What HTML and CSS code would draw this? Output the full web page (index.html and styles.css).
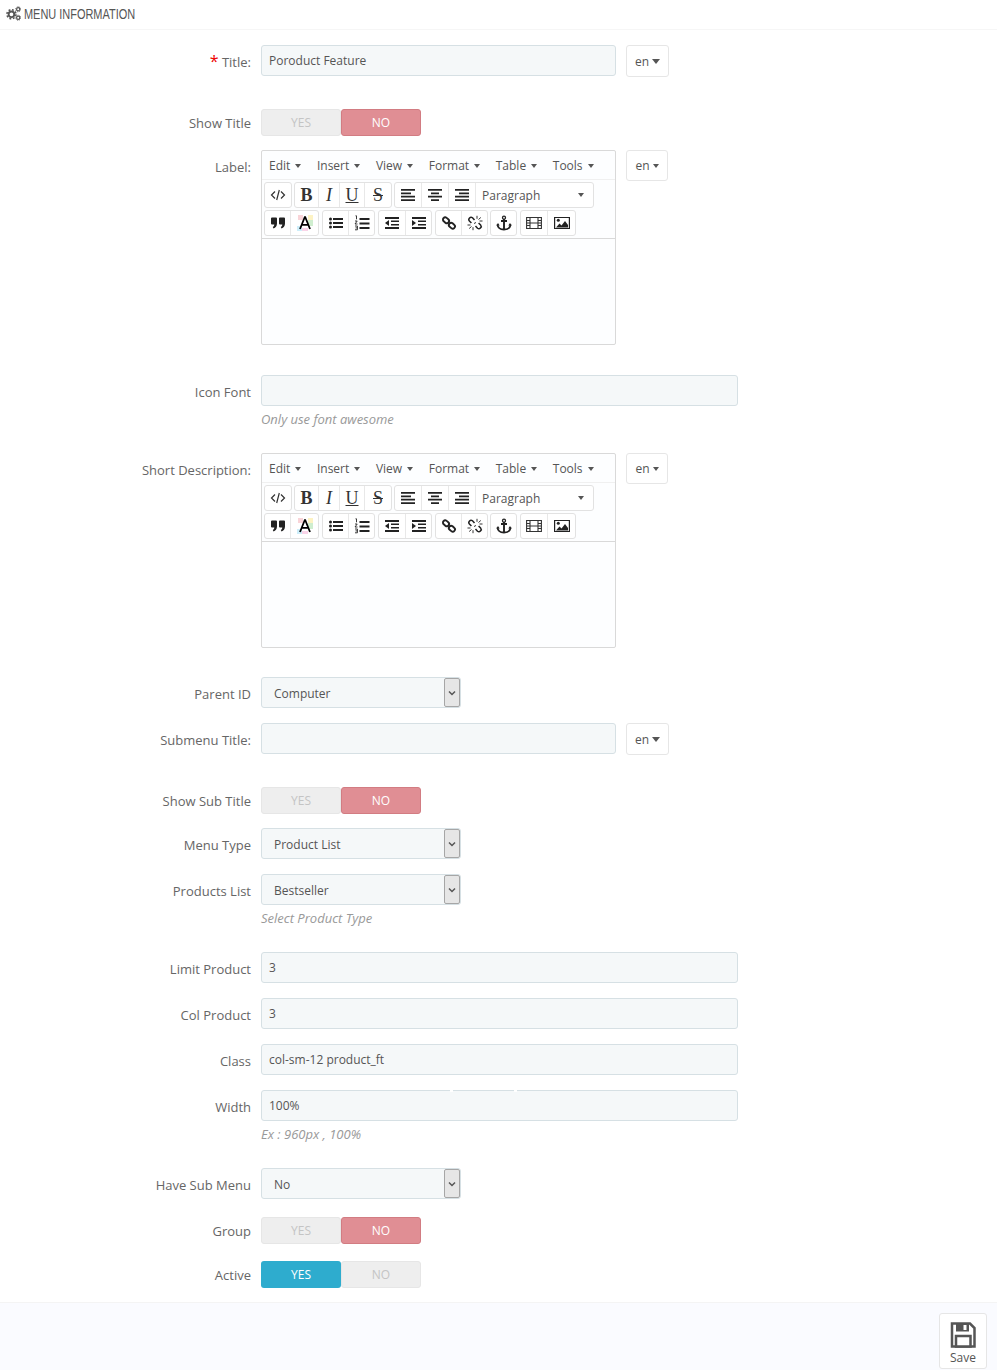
FILE: index.html
```html
<!DOCTYPE html>
<html lang="en">
  <head>
    <meta charset="UTF-8" />
    <meta name="viewport" content="width=device-width, initial-scale=1.0" />
    <title>Menu Information</title>
    <link rel="stylesheet" href="styles.css">
  </head>
  <body>
    <!-- Shared icons -->
    <svg class="sprite" xmlns="http://www.w3.org/2000/svg">
      <symbol id="i-code" viewBox="0 0 16 16"><path d="M5 4.500 1.500 8 5 11.500M11 4.500 14.500 8 11 11.500M9.300 3 6.700 13" fill="none" stroke="#333" stroke-width="1.200"/></symbol>
      <symbol id="i-left" viewBox="0 0 16 16"><path d="M1 2h14v1.800H1zM1 5.400h10v1.800H1zM1 8.800h14v1.800H1zM1 12.200h14V14H1z" fill="#222"/></symbol>
      <symbol id="i-center" viewBox="0 0 16 16"><path d="M1 2h14v1.800H1zM4 5.400h8v1.800H4zM1 8.800h14v1.800H1zM4 12.200h8V14H4z" fill="#222"/></symbol>
      <symbol id="i-right" viewBox="0 0 16 16"><path d="M1 2h14v1.800H1zM5 5.400h10v1.800H5zM1 8.800h14v1.800H1zM1 12.200h14V14H1z" fill="#222"/></symbol>
      <symbol id="i-quote" viewBox="0 0 16 16"><path d="M1 3.500a1 1 0 0 1 1-1h4a1 1 0 0 1 1 1v5c0 2.500-1.500 4.500-3.500 5L2.800 12c1-.5 1.500-1.300 1.500-2.500H2a1 1 0 0 1-1-1zM9 3.500a1 1 0 0 1 1-1h4a1 1 0 0 1 1 1v5c0 2.500-1.500 4.500-3.500 5l-.7-1.500c1-.5 1.500-1.300 1.500-2.500H10a1 1 0 0 1-1-1z" fill="#222"/></symbol>
      <symbol id="i-color" viewBox="0 0 16 16">
        <rect x="1" y="0" width="5" height="5" fill="#f9d4d8"/><rect x="11" y="0" width="5" height="5" fill="#fdf3c4"/>
        <rect x="11" y="5" width="5" height="6" fill="#cfeecf"/>
        <rect x="0" y="11" width="5" height="5" fill="#cdeefa"/><rect x="5" y="13" width="6" height="3" fill="#f9d4e8"/>
        <path d="M8 1.500 3 14M8 1.500 13 14M4.800 9.800h6.400" fill="none" stroke="#000" stroke-width="1.800"/>
      </symbol>
      <symbol id="i-bullets" viewBox="0 0 16 16"><path d="M5 3h10v2H5zM5 7h10v2H5zM5 11h10v2H5z" fill="#222"/><circle cx="2.500" cy="4" r="1.500" fill="#222"/><circle cx="2.500" cy="8" r="1.500" fill="#222"/><circle cx="2.500" cy="12" r="1.500" fill="#222"/></symbol>
      <symbol id="i-numbers" viewBox="0 0 16 16"><path d="M5.500 3h10v2h-10zM5.500 7.500h10v2h-10zM5.500 12h10v2h-10z" fill="#222"/><path d="M1.500 .8h1v3.500M1 6h2.200L1 9h2.500M1 11h2.400v3.800H1M1.500 12.900h1.900" fill="none" stroke="#222" stroke-width=".9"/></symbol>
      <symbol id="i-outdent" viewBox="0 0 16 16"><path d="M1 2h14v2H1zM7 5.500h8V7H7zM7 9h8v1.500H7zM1 12h14v2H1z" fill="#222"/><path d="M5 5v6L1 8z" fill="#222"/></symbol>
      <symbol id="i-indent" viewBox="0 0 16 16"><path d="M1 2h14v2H1zM7 5.500h8V7H7zM7 9h8v1.500H7zM1 12h14v2H1z" fill="#222"/><path d="M1 5v6l4-3z" fill="#222"/></symbol>
      <symbol id="i-link" viewBox="0 0 16 16"><g fill="none" stroke="#222" stroke-width="1.900"><rect x="1.800" y="3" width="6.500" height="4.500" rx="2.200" transform="rotate(40 5 5.200)"/><rect x="7.700" y="8.500" width="6.500" height="4.500" rx="2.200" transform="rotate(40 11 10.700)"/></g><path d="m7 7 2 2" stroke="#222" stroke-width="1.500"/></symbol>
      <symbol id="i-unlink" viewBox="0 0 16 16"><g fill="none" stroke="#222" stroke-width="1.500"><path d="M7.500 5 5.500 2.800a2.200 2.200 0 0 0-3.100 3.100l2 2.100"/><path d="m8.500 11 2 2.200a2.200 2.200 0 0 0 3.100-3.100l-2-2.100"/></g><path d="M10 .8v3M13.800 2.500l-2.300 2M15.500 6h-3M.5 10h3M2.200 13.500l2.300-2M6 15.200v-3M9 7.500 7 8.500" stroke="#333" stroke-width="1"/></symbol>
      <symbol id="i-anchor" viewBox="0 0 16 16"><circle cx="8" cy="2.700" r="1.500" fill="none" stroke="#222" stroke-width="1.300"/><path d="M8 4v10M5 6h6" stroke="#222" stroke-width="1.900" fill="none"/><path d="M1.500 9.500c.3 3.500 3.500 5 6.500 5s6.200-1.500 6.500-5" fill="none" stroke="#222" stroke-width="1.800"/><path d="M.3 10.500 2 8l1.700 2.500zM12.300 10.500 14 8l1.700 2.500z" fill="#222"/></symbol>
      <symbol id="i-film" viewBox="0 0 16 16"><path d="M.6 2.500h14.800v11H.6zM4 2.500v11M12 2.500v11M.6 5.500H4M.6 8H4M.6 10.500H4M12 5.500h3.400M12 8h3.400M12 10.500h3.400M4 8h8" fill="none" stroke="#333" stroke-width="1.100"/></symbol>
      <symbol id="i-image" viewBox="0 0 16 16"><path d="M.6 2.500h14.800v11H.6z" fill="#fff" stroke="#222" stroke-width="1.200"/><path d="m2 12.500 3.500-4 2 2 3.500-4.500 3 4v2.500z" fill="#222"/><circle cx="4.300" cy="5.200" r="1.500" fill="#222"/></symbol>
    </svg>

    <header class="panel-heading">
      <svg class="cogs" viewBox="0 0 16 16">
        <circle cx="5.800" cy="8.800" r="3" fill="none" stroke="#555" stroke-width="2"/>
        <circle cx="5.800" cy="8.800" r="4.800" fill="none" stroke="#555" stroke-width="1.700" stroke-dasharray="2 1.770"/>
        <circle cx="13" cy="3.500" r="1.700" fill="none" stroke="#555" stroke-width="1.300"/>
        <circle cx="13" cy="3.500" r="2.700" fill="none" stroke="#555" stroke-width=".9" stroke-dasharray="1.200 .92"/>
        <circle cx="13" cy="12.500" r="1.700" fill="none" stroke="#555" stroke-width="1.300"/>
        <circle cx="13" cy="12.500" r="2.700" fill="none" stroke="#555" stroke-width=".9" stroke-dasharray="1.200 .92"/>
      </svg>
      <span class="heading-text">Menu Information</span>
    </header>

    <form class="form">
      <div class="form-group after-lang">
        <label class="control-label"><em>*</em> Title:</label>
        <input class="field field-short" type="text" value="Poroduct Feature" />
        <button type="button" class="lang">en <i class="caret-big"></i></button>
      </div>

      <div class="form-group switch-row">
        <label class="control-label">Show Title</label>
        <div class="switch"><span class="off">YES</span><span class="no">NO</span></div>
      </div>

      <div class="form-group after-editor">
        <label class="control-label">Label:</label>
        <div class="editor">
          <div class="mce-menu">
            <span>Edit <i></i></span><span>Insert <i></i></span><span>View <i></i></span><span>Format <i></i></span><span>Table <i></i></span><span>Tools <i></i></span>
          </div>
          <div class="mce-toolbar">
            <div class="mce-row">
              <div class="mce-group"><button type="button" class="w26"><svg><use href="#i-code"/></svg></button></div>
              <div class="mce-group">
                <button type="button" class="w23 glyph bold">B</button><button type="button" class="w21 glyph italic">I</button><button type="button" class="w25 glyph under">U</button><button type="button" class="w27 glyph strike">S</button>
              </div>
              <div class="mce-group">
                <button type="button" class="w26"><svg><use href="#i-left"/></svg></button><button type="button"><svg><use href="#i-center"/></svg></button><button type="button"><svg><use href="#i-right"/></svg></button><button type="button" class="mce-select">Paragraph <i></i></button>
              </div>
            </div>
            <div class="mce-row mce-row-wide">
              <div class="mce-group"><button type="button" class="w25"><svg><use href="#i-quote"/></svg></button><button type="button" class="w28"><svg><use href="#i-color"/></svg></button></div>
              <div class="mce-group"><button type="button" class="w25"><svg><use href="#i-bullets"/></svg></button><button type="button" class="w26"><svg><use href="#i-numbers"/></svg></button></div>
              <div class="mce-group"><button type="button" class="w26"><svg><use href="#i-outdent"/></svg></button><button type="button" class="w26"><svg><use href="#i-indent"/></svg></button></div>
              <div class="mce-group"><button type="button" class="w25"><svg><use href="#i-link"/></svg></button><button type="button" class="w26"><svg><use href="#i-unlink"/></svg></button></div>
              <div class="mce-group mce-group-close"><button type="button" class="w25"><svg><use href="#i-anchor"/></svg></button></div>
              <div class="mce-group"><button type="button" class="w26"><svg><use href="#i-film"/></svg></button><button type="button" class="w28"><svg><use href="#i-image"/></svg></button></div>
            </div>
          </div>
          <div class="mce-body"></div>
        </div>
        <button type="button" class="lang lang-small">en <i class="caret-small"></i></button>
      </div>

      <div class="form-group">
        <label class="control-label">Icon Font</label>
        <div class="field-wrap">
          <input class="field field-wide" type="text" />
          <p class="help">Only use font awesome</p>
        </div>
      </div>

      <div class="form-group after-short">
        <label class="control-label">Short Description:</label>
        <div class="editor">
          <div class="mce-menu">
            <span>Edit <i></i></span><span>Insert <i></i></span><span>View <i></i></span><span>Format <i></i></span><span>Table <i></i></span><span>Tools <i></i></span>
          </div>
          <div class="mce-toolbar">
            <div class="mce-row">
              <div class="mce-group"><button type="button" class="w26"><svg><use href="#i-code"/></svg></button></div>
              <div class="mce-group">
                <button type="button" class="w23 glyph bold">B</button><button type="button" class="w21 glyph italic">I</button><button type="button" class="w25 glyph under">U</button><button type="button" class="w27 glyph strike">S</button>
              </div>
              <div class="mce-group">
                <button type="button" class="w26"><svg><use href="#i-left"/></svg></button><button type="button"><svg><use href="#i-center"/></svg></button><button type="button"><svg><use href="#i-right"/></svg></button><button type="button" class="mce-select">Paragraph <i></i></button>
              </div>
            </div>
            <div class="mce-row mce-row-wide">
              <div class="mce-group"><button type="button" class="w25"><svg><use href="#i-quote"/></svg></button><button type="button" class="w28"><svg><use href="#i-color"/></svg></button></div>
              <div class="mce-group"><button type="button" class="w25"><svg><use href="#i-bullets"/></svg></button><button type="button" class="w26"><svg><use href="#i-numbers"/></svg></button></div>
              <div class="mce-group"><button type="button" class="w26"><svg><use href="#i-outdent"/></svg></button><button type="button" class="w26"><svg><use href="#i-indent"/></svg></button></div>
              <div class="mce-group"><button type="button" class="w25"><svg><use href="#i-link"/></svg></button><button type="button" class="w26"><svg><use href="#i-unlink"/></svg></button></div>
              <div class="mce-group mce-group-close"><button type="button" class="w25"><svg><use href="#i-anchor"/></svg></button></div>
              <div class="mce-group"><button type="button" class="w26"><svg><use href="#i-film"/></svg></button><button type="button" class="w28"><svg><use href="#i-image"/></svg></button></div>
            </div>
          </div>
          <div class="mce-body"></div>
        </div>
        <button type="button" class="lang lang-small">en <i class="caret-small"></i></button>
      </div>

      <div class="form-group">
        <label class="control-label">Parent ID</label>
        <div class="select"><span class="select-text">Computer</span><span class="select-arrow"><svg viewBox="0 0 8 6"><path d="M1 1.500 4 4.500l3-3" fill="none" stroke="#555" stroke-width="1.500"/></svg></span></div>
      </div>

      <div class="form-group after-lang">
        <label class="control-label">Submenu Title:</label>
        <input class="field field-short" type="text" />
        <button type="button" class="lang">en <i class="caret-big"></i></button>
      </div>

      <div class="form-group switch-row">
        <label class="control-label">Show Sub Title</label>
        <div class="switch"><span class="off">YES</span><span class="no">NO</span></div>
      </div>

      <div class="form-group">
        <label class="control-label">Menu Type</label>
        <div class="select"><span class="select-text">Product List</span><span class="select-arrow"><svg viewBox="0 0 8 6"><path d="M1 1.500 4 4.500l3-3" fill="none" stroke="#555" stroke-width="1.500"/></svg></span></div>
      </div>

      <div class="form-group">
        <label class="control-label">Products List</label>
        <div class="field-wrap">
          <div class="select"><span class="select-text">Bestseller</span><span class="select-arrow"><svg viewBox="0 0 8 6"><path d="M1 1.500 4 4.500l3-3" fill="none" stroke="#555" stroke-width="1.500"/></svg></span></div>
          <p class="help">Select Product Type</p>
        </div>
      </div>

      <div class="form-group">
        <label class="control-label">Limit Product</label>
        <input class="field field-wide" type="text" value="3" />
      </div>

      <div class="form-group">
        <label class="control-label">Col Product</label>
        <input class="field field-wide" type="text" value="3" />
      </div>

      <div class="form-group">
        <label class="control-label">Class</label>
        <input class="field field-wide" type="text" value="col-sm-12 product_ft" />
      </div>

      <div class="form-group">
        <label class="control-label">Width</label>
        <div class="field-wrap notched">
          <input class="field field-wide" type="text" value="100%" />
          <p class="help">Ex : 960px , 100%</p>
        </div>
      </div>

      <div class="form-group after-select">
        <label class="control-label">Have Sub Menu</label>
        <div class="select"><span class="select-text">No</span><span class="select-arrow"><svg viewBox="0 0 8 6"><path d="M1 1.500 4 4.500l3-3" fill="none" stroke="#555" stroke-width="1.500"/></svg></span></div>
      </div>

      <div class="form-group switch-row group-tight">
        <label class="control-label">Group</label>
        <div class="switch"><span class="off">YES</span><span class="no">NO</span></div>
      </div>

      <div class="form-group switch-row">
        <label class="control-label">Active</label>
        <div class="switch"><span class="yes">YES</span><span class="off">NO</span></div>
      </div>
    </form>

    <footer class="panel-footer">
      <button type="button" class="save">
        <svg viewBox="0 0 26 26"><path d="M2 1.500h18l4.500 4.500v18.500H2z" fill="#fff" stroke="#555" stroke-width="2.500"/><path d="M6 1.500h13v8H6z" fill="#555"/><path d="M13.500 3h3v5h-3z" fill="#fff"/><path d="M6 14h14.500v10.500H6z" fill="#fff" stroke="#555" stroke-width="2.500"/></svg>
        <span>Save</span>
      </button>
    </footer>
  </body>
</html>
```

FILE: styles.css
```css
* {
  box-sizing: border-box;
}

body {
  margin: 0;
  background: #fff;
  color: #666;
  font-family: "Open Sans", sans-serif;
  font-size: 13px;
}

.sprite {
  display: none;
}

.panel-heading {
  display: flex;
  align-items: center;
  gap: 3px;
  height: 30px;
  padding: 0 0 2px 6px;
  border-bottom: 1px solid #f6f6f6;
  color: #555;
  font-family: "Liberation Sans", sans-serif;
  font-size: 15px;
  text-transform: uppercase;
}

.heading-text {
  transform: scaleX(0.73);
  transform-origin: left center;
}

.cogs {
  width: 15px;
  height: 15px;
}

.form {
  padding-top: 15px;
}

.form-group {
  display: flex;
  align-items: flex-start;
  gap: 10px;
  margin-bottom: 15px;
}

.after-lang {
  margin-bottom: 32px;
}

.after-editor {
  margin-bottom: 30px;
}

.after-short {
  margin-bottom: 29px;
}

.after-select {
  margin-bottom: 18px;
}

.switch-row {
  margin-bottom: 14px;
}

.switch-row .control-label {
  padding-top: 5px;
}

.group-tight {
  margin-bottom: 17px;
}

.control-label {
  flex: 0 0 251px;
  padding-top: 8px;
  line-height: 18px;
  text-align: right;
}

.control-label em {
  color: #e00;
  font-size: 16px;
  font-style: normal;
  line-height: 14px;
}

.field-wrap {
  position: relative;
}

.field {
  display: block;
  height: 31px;
  padding: 0 7px;
  border: 1px solid #d6e0e4;
  border-radius: 3px;
  background: #f5f8f9;
  color: #555;
  font-family: inherit;
  font-size: 12px;
}

.field-short {
  width: 355px;
}

.field-wide {
  width: 477px;
}

/* two small gaps in the top edge of the width field */
.notched::before,
.notched::after {
  content: "";
  position: absolute;
  top: 0;
  width: 3px;
  height: 2px;
  background: #fff;
}

.notched::before {
  left: 189px;
}

.notched::after {
  left: 253px;
}

.help {
  margin: 0;
  padding-top: 4px;
  height: 32px;
  color: #999;
  font-size: 13px;
  font-style: italic;
  line-height: 18px;
}

.lang {
  display: flex;
  align-items: center;
  justify-content: center;
  gap: 3px;
  width: 43px;
  height: 32px;
  padding: 0;
  border: 1px solid #e6e6e6;
  border-radius: 3px;
  background: #fff;
  color: #555;
  font-family: inherit;
  font-size: 12px;
}

.lang-small {
  width: 42px;
  height: 31px;
}

.caret-big {
  border-top: 5px solid #555;
  border-left: 4px solid transparent;
  border-right: 4px solid transparent;
}

.caret-small {
  border-top: 4px solid #555;
  border-left: 3px solid transparent;
  border-right: 3px solid transparent;
}

.switch {
  display: flex;
  width: 160px;
  height: 27px;
  font-size: 12px;
  text-transform: uppercase;
}

.switch span {
  display: flex;
  align-items: center;
  justify-content: center;
  width: 80px;
  border-radius: 3px;
}

.switch .off {
  border: 1px solid #e6e6e6;
  background: #eee;
  color: #c4c4c4;
}

.switch .no {
  border: 1px solid #d27c82;
  background: #e08e94;
  color: #fff;
}

.switch .yes {
  background: #2eacce;
  color: #fff;
}

.editor {
  width: 355px;
  border: 1px solid #d9d9d9;
  border-radius: 2px;
  background: #fdfeff;
}

.mce-menu {
  display: flex;
  align-items: center;
  gap: 15.500px;
  height: 29px;
  padding-left: 7px;
  border-bottom: 1px solid #f0f0f0;
  color: #555;
  font-size: 12px;
}

.mce-menu i,
.mce-select i {
  display: inline-block;
  margin-left: 2px;
  vertical-align: 2px;
  border-top: 4px solid #555;
  border-left: 3.500px solid transparent;
  border-right: 3.500px solid transparent;
}

.mce-toolbar {
  padding: 2px;
  border-bottom: 1px solid #d9d9d9;
}

.mce-row {
  display: flex;
  gap: 2px;
  height: 26px;
  margin-bottom: 2px;
}

.mce-row-wide {
  gap: 3px;
  margin-bottom: 0;
}

.mce-group {
  display: flex;
  border: 1px solid #e2e2e2;
  border-radius: 3px;
  background: #fff;
}

.mce-group-close {
  margin-left: -1px;
}

.mce-group button {
  display: flex;
  align-items: center;
  justify-content: center;
  width: 27px;
  padding: 0;
  border: 0;
  border-left: 1px solid #e8e8e8;
  background: transparent;
  color: #333;
}

.mce-group button:first-child {
  border-left: 0;
}

.mce-group svg {
  width: 16px;
  height: 16px;
}

.mce-group .w21 {
  width: 21px;
}

.mce-group .w23 {
  width: 23px;
}

.mce-group .w25 {
  width: 25px;
}

.mce-group .w26 {
  width: 26px;
}

.mce-group .w28 {
  width: 28px;
}

.glyph {
  font-family: "Liberation Serif", serif;
  font-size: 18px;
}

.bold {
  font-weight: bold;
}

.italic {
  font-style: italic;
}

.under {
  text-decoration: underline;
}

.strike {
  text-decoration: line-through;
}

.mce-group .mce-select {
  justify-content: space-between;
  width: 118px;
  padding: 0 9px 0 6px;
  font-family: "Open Sans", sans-serif;
  font-size: 12px;
  color: #555;
}

.mce-body {
  height: 105px;
}

.select {
  display: flex;
  align-items: center;
  justify-content: space-between;
  width: 200px;
  height: 31px;
  padding-left: 12px;
  border: 1px solid #d6e0e4;
  border-radius: 3px;
  background: #f5f8f9;
  color: #555;
  font-size: 12px;
}

.select-text {
  padding-top: 2px;
}

.select-arrow {
  display: flex;
  align-items: center;
  justify-content: center;
  width: 16px;
  height: 29px;
  border: 1px solid #a6a6a6;
  border-radius: 2px;
  background: #e6e6e6;
}

.select-arrow svg {
  width: 8px;
  height: 6px;
}

.panel-footer {
  display: flex;
  justify-content: flex-end;
  height: 68px;
  margin-top: 14px;
  padding: 10px 10px 0 0;
  border-top: 1px solid #f4f4f4;
  background: #fafbff;
}

.save {
  display: flex;
  flex-direction: column;
  align-items: center;
  width: 48px;
  height: 56px;
  padding: 8px 0 0;
  border: 1px solid #e6e6e6;
  border-radius: 3px;
  background: #fff;
  color: #555;
  font-family: inherit;
  font-size: 12px;
}

.save svg {
  width: 26px;
  height: 26px;
  margin-bottom: 1px;
}
```
